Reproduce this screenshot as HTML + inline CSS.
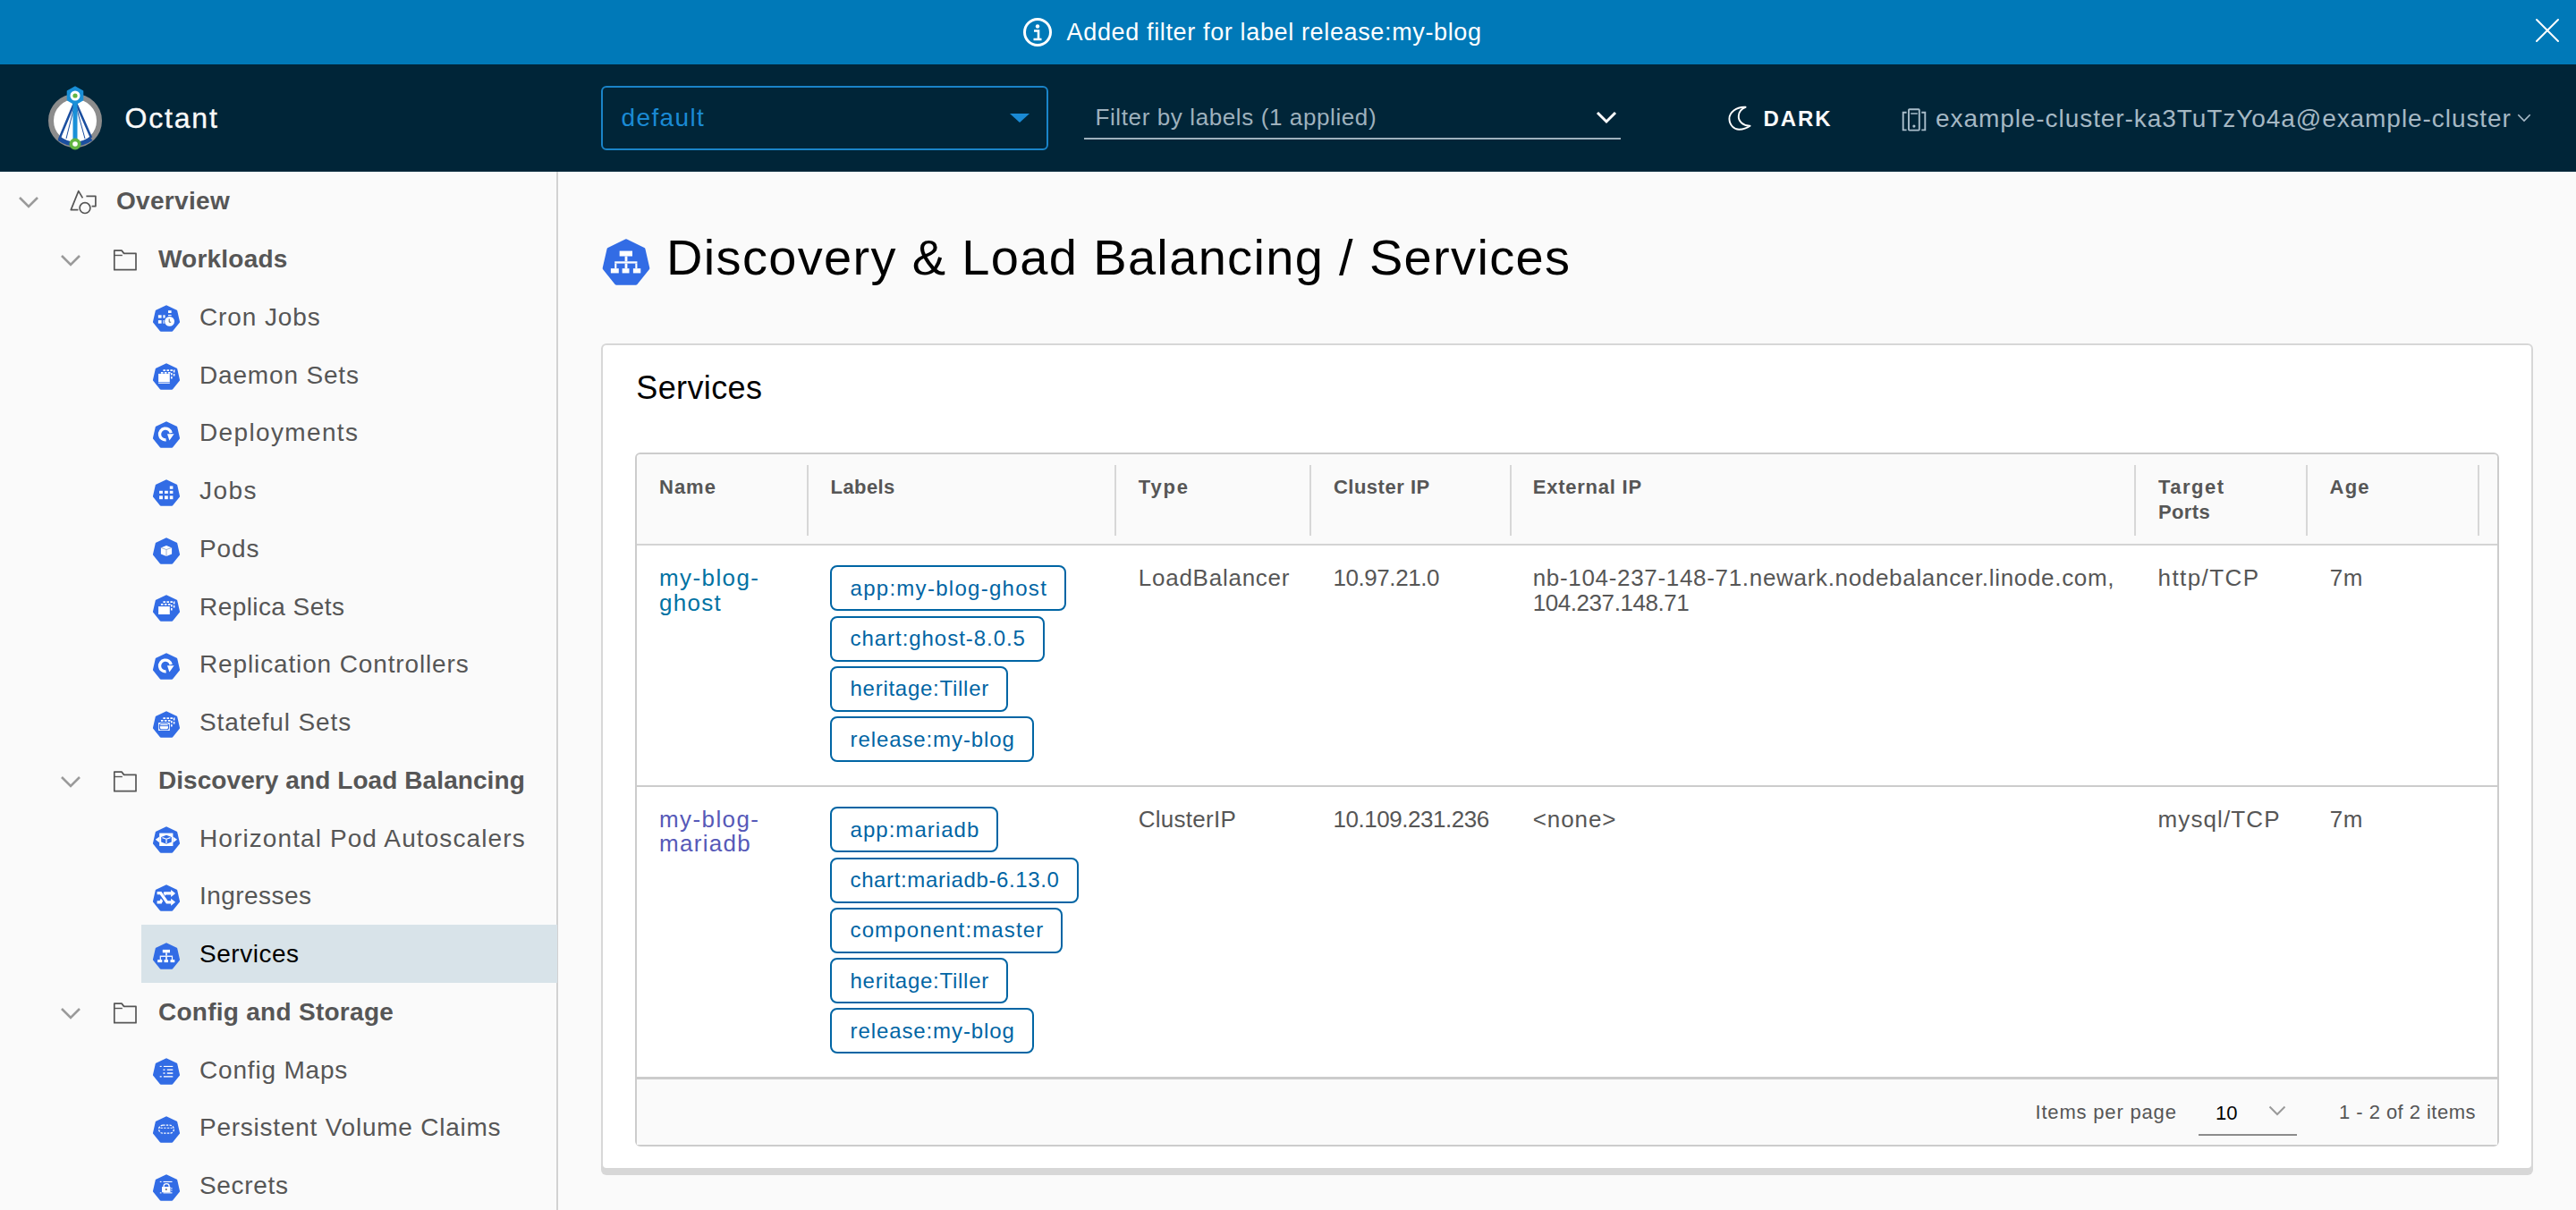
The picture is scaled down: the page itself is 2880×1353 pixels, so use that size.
<!DOCTYPE html>
<html><head><meta charset="utf-8"><style>
html,body{margin:0;padding:0;width:2880px;height:1353px;overflow:hidden;font-family:"Liberation Sans", sans-serif;}
</style></head><body>
<div style="position:absolute;left:0px;top:0px;width:2880px;height:1353px;background:#fafafa"></div>
<div style="position:absolute;left:0px;top:0px;width:2880px;height:72px;background:#0079b8"></div>
<div style="position:absolute;left:0px;top:72px;width:2880px;height:120px;background:#002538"></div>
<div style="position:absolute;left:0px;top:192px;width:622px;height:1161px;background:#fafafa"></div>
<div style="position:absolute;left:622px;top:192px;width:2px;height:1161px;background:#d2d2d2"></div>
<svg style="position:absolute;left:1143px;top:19px;" width="34" height="34" viewBox="0 0 34 34"><circle cx="17" cy="17" r="14.5" fill="none" stroke="#fff" stroke-width="3"/><circle cx="17" cy="10.5" r="2.2" fill="#fff"/><path d="M13 15.5h5v9.5M12.5 25h9" fill="none" stroke="#fff" stroke-width="2.6"/></svg>
<div style="position:absolute;left:1192.60px;top:22.94px;font-size:27px;line-height:27px;color:#ffffff;letter-spacing:0.641px;white-space:nowrap;">Added filter for label release:my-blog</div>
<svg style="position:absolute;left:2834px;top:20px;" width="28" height="28" viewBox="0 0 28 28"><path d="M2 2L26 26M26 2L2 26" stroke="#fff" stroke-width="2" stroke-linecap="round" fill="none"/></svg>
<svg style="position:absolute;left:50px;top:93px;" width="70" height="76" viewBox="0 0 70 76">
<circle cx="34" cy="42" r="27" fill="#fff" stroke="#8c8c8c" stroke-width="6"/>
<path d="M16 62 Q34 74 52 62" fill="none" stroke="#1b4fa0" stroke-width="5"/>
<path d="M34 20 L16 63 M34 20 L52 61" stroke="#1b4fa0" stroke-width="2.6" fill="none"/>
<path d="M34 22 L24 62 M34 22 L45 62" stroke="#1b4fa0" stroke-width="1" fill="none"/>
<rect x="31.5" y="18" width="5" height="48" fill="#1a90d8"/>
<polygon points="34.00,4.00 42.57,8.95 42.57,18.85 34.00,23.80 25.43,18.85 25.43,8.95" fill="#1a90d8" stroke="#1a90d8" stroke-width="1.4" stroke-linejoin="round"/>
<circle cx="34" cy="14" r="5.5" fill="#fff"/>
<circle cx="34" cy="14" r="2.6" fill="#62b543"/>
<circle cx="34" cy="68" r="6.5" fill="#62b543"/>
<circle cx="34" cy="68" r="2.8" fill="#fff"/>
</svg>
<div style="position:absolute;left:139.40px;top:116.01px;font-size:32px;line-height:32px;color:#fafafa;letter-spacing:1.847px;white-space:nowrap;-webkit-text-stroke:0.35px #fafafa;">Octant</div>
<div style="position:absolute;left:672px;top:96px;width:500px;height:72px;box-sizing:border-box;border:2px solid #1a84c8;border-radius:6px"></div>
<div style="position:absolute;left:694.60px;top:118.10px;font-size:28px;line-height:28px;color:#1a8ad4;letter-spacing:1.351px;white-space:nowrap;">default</div>
<svg style="position:absolute;left:1129px;top:127px;" width="22" height="10" viewBox="0 0 22 10"><path d="M0 0H22L11 10Z" fill="#1a8ad4"/></svg>
<div style="position:absolute;left:1224.50px;top:117.99px;font-size:26px;line-height:26px;color:#9eb1bd;letter-spacing:0.607px;white-space:nowrap;">Filter by labels (1 applied)</div>
<div style="position:absolute;left:1212px;top:154px;width:600px;height:2px;background:#9eb1bd"></div>
<svg style="position:absolute;left:1784px;top:124px;" width="24" height="16" viewBox="0 0 24 16"><path d="M2 2L12 12L22 2" fill="none" stroke="#fff" stroke-width="3"/></svg>
<svg style="position:absolute;left:1930px;top:118px;" width="30" height="30" viewBox="0 0 30 30"><path d="M21.6 1.8C11 1.2 3.2 8 3.4 15C3.6 22 9 27 14.5 26.8C19.8 26.6 24 24.5 26.6 22.7C19 23 13.2 17.5 13.8 11.5C14.2 7 17.5 3.3 21.6 1.8Z" fill="none" stroke="#fff" stroke-width="1.9" stroke-linejoin="round"/></svg>
<div style="position:absolute;left:1971.50px;top:121.48px;font-size:24px;line-height:24px;color:#fafafa;font-weight:700;letter-spacing:1.896px;white-space:nowrap;">DARK</div>
<svg style="position:absolute;left:2124px;top:120px;" width="32" height="28" viewBox="0 0 32 28"><rect x="10" y="2.2" width="11.8" height="23.4" rx="0.8" fill="none" stroke="#a9bdca" stroke-width="1.9"/><path d="M12.2 7H19.8" stroke="#a9bdca" stroke-width="1.5"/><circle cx="15.9" cy="21.1" r="1.6" fill="#a9bdca"/><path d="M7.6 5.8H3.7V25.4H7.6M24.3 5.8H28.3V25.4H24.3" fill="none" stroke="#a9bdca" stroke-width="1.9"/></svg>
<div style="position:absolute;left:2164.00px;top:118.80px;font-size:28px;line-height:28px;color:#a5b8c4;letter-spacing:0.932px;white-space:nowrap;">example-cluster-ka3TuTzYo4a@example-cluster</div>
<svg style="position:absolute;left:2814px;top:127px;" width="16" height="10" viewBox="0 0 16 10"><path d="M1.3 1.3L8 8L14.7 1.3" fill="none" stroke="#a9bdca" stroke-width="1.6"/></svg>
<svg style="position:absolute;left:20px;top:219px;" width="24" height="14" viewBox="0 0 24 14"><path d="M2 2L12 12L22 2" fill="none" stroke="#9a9a9a" stroke-width="2.6"/></svg>
<svg style="position:absolute;left:78px;top:212px;" width="32" height="30" viewBox="0 0 32 30"><path d="M14.4 9.4L9.8 1.6L1.3 22.6H9.4" fill="none" stroke="#565656" stroke-width="1.7" stroke-linejoin="round"/><path d="M18.4 7.4H28.9V18.6H24.6" fill="none" stroke="#565656" stroke-width="1.7" stroke-linejoin="round"/><circle cx="17" cy="20.6" r="5.9" fill="none" stroke="#565656" stroke-width="1.7"/></svg>
<div style="position:absolute;left:130.00px;top:211.30px;font-size:28px;line-height:28px;color:#565656;font-weight:700;letter-spacing:0.308px;white-space:nowrap;">Overview</div>
<svg style="position:absolute;left:67px;top:284px;" width="24" height="14" viewBox="0 0 24 14"><path d="M2 2L12 12L22 2" fill="none" stroke="#9a9a9a" stroke-width="2.6"/></svg>
<svg style="position:absolute;left:126px;top:278px;" width="28" height="26" viewBox="0 0 28 26"><path d="M1.8 2.1H10L12.6 5.4H26V23.7H1.8Z" fill="none" stroke="#565656" stroke-width="1.7" stroke-linejoin="round"/><path d="M1.8 7.5H10.8" stroke="#565656" stroke-width="1.4"/></svg>
<div style="position:absolute;left:176.90px;top:276.06px;font-size:28px;line-height:28px;color:#565656;font-weight:700;letter-spacing:0.230px;white-space:nowrap;">Workloads</div>
<svg style="position:absolute;left:170.0px;top:340.47px;" width="32" height="32" viewBox="0 0 32 32"><polygon points="16.00,2.56 27.10,7.91 29.84,19.92 22.16,29.55 9.84,29.55 2.16,19.92 4.90,7.91" fill="#326ce5" stroke="#326ce5" stroke-width="2.4" stroke-linejoin="round"/><rect x="6.90" y="12.30" width="3.70" height="3.30" fill="#ffffff"/><rect x="12.40" y="12.30" width="2.20" height="3.30" fill="#ffffff"/><rect x="6.90" y="18.10" width="3.70" height="3.60" fill="#ffffff"/><rect x="12.40" y="18.10" width="2.20" height="3.60" fill="#ffffff"/><rect x="18.00" y="7.20" width="3.60" height="2.80" fill="#ffffff"/><rect x="18.00" y="12.00" width="3.60" height="1.30" fill="#ffffff"/><circle cx="19.6" cy="19.4" r="6.3" fill="#326ce5"/><circle cx="19.6" cy="19.4" r="5.4" fill="#fff"/><path d="M19.2 16.6V20.2H21.2" fill="none" stroke="#44546e" stroke-width="0.9"/></svg>
<div style="position:absolute;left:223.00px;top:340.82px;font-size:28px;line-height:28px;color:#565656;letter-spacing:0.895px;white-space:nowrap;">Cron Jobs</div>
<svg style="position:absolute;left:170.0px;top:405.23px;" width="32" height="32" viewBox="0 0 32 32"><polygon points="16.00,2.56 27.10,7.91 29.84,19.92 22.16,29.55 9.84,29.55 2.16,19.92 4.90,7.91" fill="#326ce5" stroke="#326ce5" stroke-width="2.4" stroke-linejoin="round"/><path d="M12.4 9.1H24.6V16" fill="none" stroke="#fff" stroke-width="1.6" stroke-dasharray="2.6 1.4"/><path d="M9.9 11.9H21.8V18.5" fill="none" stroke="#fff" stroke-width="1.6" stroke-dasharray="2.6 1.4"/><rect x="7.10" y="12.90" width="12.70" height="9.30" fill="#ffffff"/><rect x="7.10" y="22.80" width="12.70" height="1.00" fill="#ffffff"/></svg>
<div style="position:absolute;left:223.00px;top:405.58px;font-size:28px;line-height:28px;color:#565656;letter-spacing:0.833px;white-space:nowrap;">Daemon Sets</div>
<svg style="position:absolute;left:170.0px;top:469.99px;" width="32" height="32" viewBox="0 0 32 32"><polygon points="16.00,2.56 27.10,7.91 29.84,19.92 22.16,29.55 9.84,29.55 2.16,19.92 4.90,7.91" fill="#326ce5" stroke="#326ce5" stroke-width="2.4" stroke-linejoin="round"/><path d="M15.6 21.9 A6.4 6.4 0 1 1 21.2 14.2" fill="none" stroke="#fff" stroke-width="3.3"/><path d="M17.0 15.2H24.6L19.4 22.4Z" fill="#fff"/></svg>
<div style="position:absolute;left:223.00px;top:470.34px;font-size:28px;line-height:28px;color:#565656;letter-spacing:1.356px;white-space:nowrap;">Deployments</div>
<svg style="position:absolute;left:170.0px;top:534.75px;" width="32" height="32" viewBox="0 0 32 32"><polygon points="16.00,2.56 27.10,7.91 29.84,19.92 22.16,29.55 9.84,29.55 2.16,19.92 4.90,7.91" fill="#326ce5" stroke="#326ce5" stroke-width="2.4" stroke-linejoin="round"/><rect x="19.80" y="8.50" width="3.60" height="3.30" fill="#ffffff"/><rect x="8.10" y="13.80" width="3.80" height="3.10" fill="#ffffff"/><rect x="14.00" y="13.80" width="3.80" height="3.10" fill="#ffffff"/><rect x="19.80" y="13.80" width="3.60" height="3.10" fill="#ffffff"/><rect x="8.10" y="19.40" width="3.80" height="3.80" fill="#ffffff"/><rect x="14.00" y="19.40" width="3.80" height="3.80" fill="#ffffff"/><rect x="19.80" y="19.40" width="3.60" height="3.80" fill="#ffffff"/></svg>
<div style="position:absolute;left:223.00px;top:535.10px;font-size:28px;line-height:28px;color:#565656;letter-spacing:1.481px;white-space:nowrap;">Jobs</div>
<svg style="position:absolute;left:170.0px;top:599.51px;" width="32" height="32" viewBox="0 0 32 32"><polygon points="16.00,2.56 27.10,7.91 29.84,19.92 22.16,29.55 9.84,29.55 2.16,19.92 4.90,7.91" fill="#326ce5" stroke="#326ce5" stroke-width="2.4" stroke-linejoin="round"/><path d="M16 9.9L22.1 12.4V19.5L16 22L9.9 19.5V12.4Z" fill="#fff"/><path d="M9.9 12.4L16 14.5L22.1 12.4M16 14.5V22" fill="none" stroke="#8aa0c8" stroke-width="0.8"/></svg>
<div style="position:absolute;left:223.00px;top:599.86px;font-size:28px;line-height:28px;color:#565656;letter-spacing:0.891px;white-space:nowrap;">Pods</div>
<svg style="position:absolute;left:170.0px;top:664.27px;" width="32" height="32" viewBox="0 0 32 32"><polygon points="16.00,2.56 27.10,7.91 29.84,19.92 22.16,29.55 9.84,29.55 2.16,19.92 4.90,7.91" fill="#326ce5" stroke="#326ce5" stroke-width="2.4" stroke-linejoin="round"/><path d="M12.4 9.1H24.6V16" fill="none" stroke="#fff" stroke-width="1.6" stroke-dasharray="2.6 1.4"/><path d="M9.9 11.9H21.8V18.5" fill="none" stroke="#fff" stroke-width="1.6" stroke-dasharray="2.6 1.4"/><rect x="7.10" y="14.10" width="12.70" height="8.90" fill="#ffffff"/></svg>
<div style="position:absolute;left:223.00px;top:664.62px;font-size:28px;line-height:28px;color:#565656;letter-spacing:0.427px;white-space:nowrap;">Replica Sets</div>
<svg style="position:absolute;left:170.0px;top:729.03px;" width="32" height="32" viewBox="0 0 32 32"><polygon points="16.00,2.56 27.10,7.91 29.84,19.92 22.16,29.55 9.84,29.55 2.16,19.92 4.90,7.91" fill="#326ce5" stroke="#326ce5" stroke-width="2.4" stroke-linejoin="round"/><path d="M15.6 21.9 A6.4 6.4 0 1 1 21.2 14.2" fill="none" stroke="#fff" stroke-width="3.3"/><path d="M17.0 15.2H24.6L19.4 22.4Z" fill="#fff"/></svg>
<div style="position:absolute;left:223.00px;top:729.38px;font-size:28px;line-height:28px;color:#565656;letter-spacing:0.867px;white-space:nowrap;">Replication Controllers</div>
<svg style="position:absolute;left:170.0px;top:793.79px;" width="32" height="32" viewBox="0 0 32 32"><polygon points="16.00,2.56 27.10,7.91 29.84,19.92 22.16,29.55 9.84,29.55 2.16,19.92 4.90,7.91" fill="#326ce5" stroke="#326ce5" stroke-width="2.4" stroke-linejoin="round"/><path d="M12.4 9.1H24.6V16" fill="none" stroke="#fff" stroke-width="1.6" stroke-dasharray="2.6 1.4"/><path d="M9.9 11.9H21.8V18.5" fill="none" stroke="#fff" stroke-width="1.6" stroke-dasharray="2.6 1.4"/><rect x="7.10" y="14.00" width="12.70" height="9.00" fill="#ffffff"/><rect x="8.4" y="15.3" width="10.1" height="6.4" rx="2" fill="none" stroke="#326ce5" stroke-width="1.1"/><path d="M8.4 17.6H18.5" stroke="#326ce5" stroke-width="1"/></svg>
<div style="position:absolute;left:223.00px;top:794.14px;font-size:28px;line-height:28px;color:#565656;letter-spacing:0.868px;white-space:nowrap;">Stateful Sets</div>
<svg style="position:absolute;left:67px;top:867px;" width="24" height="14" viewBox="0 0 24 14"><path d="M2 2L12 12L22 2" fill="none" stroke="#9a9a9a" stroke-width="2.6"/></svg>
<svg style="position:absolute;left:126px;top:861px;" width="28" height="26" viewBox="0 0 28 26"><path d="M1.8 2.1H10L12.6 5.4H26V23.7H1.8Z" fill="none" stroke="#565656" stroke-width="1.7" stroke-linejoin="round"/><path d="M1.8 7.5H10.8" stroke="#565656" stroke-width="1.4"/></svg>
<div style="position:absolute;left:176.90px;top:858.90px;font-size:28px;line-height:28px;color:#565656;font-weight:700;letter-spacing:0.082px;white-space:nowrap;">Discovery and Load Balancing</div>
<svg style="position:absolute;left:170.0px;top:923.31px;" width="32" height="32" viewBox="0 0 32 32"><polygon points="16.00,2.56 27.10,7.91 29.84,19.92 22.16,29.55 9.84,29.55 2.16,19.92 4.90,7.91" fill="#326ce5" stroke="#326ce5" stroke-width="2.4" stroke-linejoin="round"/><rect x="8.20" y="8.60" width="15.20" height="14.40" fill="#ffffff"/><path d="M16 10.8L21.8 13V18.6L16 20.8L10.2 18.6V13Z" fill="#326ce5"/><path d="M11.5 13.6L16 15.2L20.5 13.6M16 15.2V20" fill="none" stroke="#fff" stroke-width="1.2"/><path d="M3.8 15.8L8.3 12.4V19.3Z" fill="#fff"/><path d="M28.1 15.8L23.4 12.4V19.3Z" fill="#fff"/></svg>
<div style="position:absolute;left:223.00px;top:923.66px;font-size:28px;line-height:28px;color:#565656;letter-spacing:1.099px;white-space:nowrap;">Horizontal Pod Autoscalers</div>
<svg style="position:absolute;left:170.0px;top:988.07px;" width="32" height="32" viewBox="0 0 32 32"><polygon points="16.00,2.56 27.10,7.91 29.84,19.92 22.16,29.55 9.84,29.55 2.16,19.92 4.90,7.91" fill="#326ce5" stroke="#326ce5" stroke-width="2.4" stroke-linejoin="round"/><path d="M5.6 20.8H9.6L14.4 10.9H21.5" fill="none" stroke="#fff" stroke-width="3.2" stroke-linejoin="miter"/><path d="M8.6 10.6L16.8 20.8" fill="none" stroke="#326ce5" stroke-width="5.6"/><path d="M5.6 10.6H9.6L16.8 20.8H21.5" fill="none" stroke="#fff" stroke-width="3.2"/><path d="M21.1 6.9L26.1 10.9L21.1 14.9Z" fill="#fff"/><path d="M21.1 16.8L26.1 20.8L21.1 24.8Z" fill="#fff"/></svg>
<div style="position:absolute;left:223.00px;top:988.42px;font-size:28px;line-height:28px;color:#565656;letter-spacing:0.447px;white-space:nowrap;">Ingresses</div>
<div style="position:absolute;left:158px;top:1034px;width:465px;height:65px;background:#d8e3e9"></div>
<svg style="position:absolute;left:170.0px;top:1052.83px;" width="32" height="32" viewBox="0 0 32 32"><polygon points="16.00,2.56 27.10,7.91 29.84,19.92 22.16,29.55 9.84,29.55 2.16,19.92 4.90,7.91" fill="#326ce5" stroke="#326ce5" stroke-width="2.4" stroke-linejoin="round"/><rect x="11.80" y="8.90" width="8.20" height="3.40" fill="#ffffff"/><rect x="15.20" y="12.30" width="1.60" height="3.30" fill="#ffffff"/><rect x="8.70" y="15.60" width="14.40" height="1.30" fill="#ffffff"/><rect x="8.70" y="16.90" width="1.20" height="3.20" fill="#ffffff"/><rect x="15.20" y="16.90" width="1.60" height="3.20" fill="#ffffff"/><rect x="21.90" y="16.90" width="1.20" height="3.20" fill="#ffffff"/><rect x="6.20" y="20.10" width="5.10" height="3.00" fill="#ffffff"/><rect x="13.50" y="20.10" width="4.50" height="3.00" fill="#ffffff"/><rect x="20.50" y="20.10" width="4.80" height="3.00" fill="#ffffff"/></svg>
<div style="position:absolute;left:223.00px;top:1053.18px;font-size:28px;line-height:28px;color:#000000;letter-spacing:0.518px;white-space:nowrap;">Services</div>
<svg style="position:absolute;left:67px;top:1126px;" width="24" height="14" viewBox="0 0 24 14"><path d="M2 2L12 12L22 2" fill="none" stroke="#9a9a9a" stroke-width="2.6"/></svg>
<svg style="position:absolute;left:126px;top:1120px;" width="28" height="26" viewBox="0 0 28 26"><path d="M1.8 2.1H10L12.6 5.4H26V23.7H1.8Z" fill="none" stroke="#565656" stroke-width="1.7" stroke-linejoin="round"/><path d="M1.8 7.5H10.8" stroke="#565656" stroke-width="1.4"/></svg>
<div style="position:absolute;left:176.90px;top:1117.94px;font-size:28px;line-height:28px;color:#565656;font-weight:700;letter-spacing:0.278px;white-space:nowrap;">Config and Storage</div>
<svg style="position:absolute;left:170.0px;top:1182.35px;" width="32" height="32" viewBox="0 0 32 32"><polygon points="16.00,2.56 27.10,7.91 29.84,19.92 22.16,29.55 9.84,29.55 2.16,19.92 4.90,7.91" fill="#326ce5" stroke="#326ce5" stroke-width="2.4" stroke-linejoin="round"/><rect x="8.70" y="9.90" width="2.00" height="1.10" fill="#ffffff"/><rect x="12.90" y="9.90" width="10.40" height="1.10" fill="#ffffff"/><rect x="12.50" y="13.60" width="1.90" height="1.30" fill="#ffffff"/><rect x="16.80" y="13.60" width="6.50" height="1.30" fill="#ffffff"/><rect x="12.50" y="17.30" width="1.90" height="1.50" fill="#ffffff"/><rect x="16.80" y="17.30" width="6.50" height="1.50" fill="#ffffff"/><rect x="8.70" y="21.20" width="2.00" height="1.30" fill="#ffffff"/><rect x="12.90" y="21.20" width="10.40" height="1.30" fill="#ffffff"/></svg>
<div style="position:absolute;left:223.00px;top:1182.70px;font-size:28px;line-height:28px;color:#565656;letter-spacing:0.818px;white-space:nowrap;">Config Maps</div>
<svg style="position:absolute;left:170.0px;top:1247.11px;" width="32" height="32" viewBox="0 0 32 32"><polygon points="16.00,2.56 27.10,7.91 29.84,19.92 22.16,29.55 9.84,29.55 2.16,19.92 4.90,7.91" fill="#326ce5" stroke="#326ce5" stroke-width="2.4" stroke-linejoin="round"/><rect x="7.6" y="11.2" width="16.8" height="9" rx="4.5" fill="none" stroke="#fff" stroke-width="1.3" stroke-dasharray="2.4 1.3"/><path d="M9.5 14.2H22.5" stroke="#fff" stroke-width="1.1" stroke-dasharray="2.4 1.3"/></svg>
<div style="position:absolute;left:223.00px;top:1247.46px;font-size:28px;line-height:28px;color:#565656;letter-spacing:0.763px;white-space:nowrap;">Persistent Volume Claims</div>
<svg style="position:absolute;left:170.0px;top:1311.87px;" width="32" height="32" viewBox="0 0 32 32"><polygon points="16.00,2.56 27.10,7.91 29.84,19.92 22.16,29.55 9.84,29.55 2.16,19.92 4.90,7.91" fill="#326ce5" stroke="#326ce5" stroke-width="2.4" stroke-linejoin="round"/><rect x="8.80" y="8.90" width="1.70" height="1.10" fill="#ffffff"/><rect x="12.50" y="8.90" width="10.00" height="1.10" fill="#ffffff"/><rect x="8.80" y="21.30" width="1.70" height="1.10" fill="#ffffff"/><rect x="12.50" y="21.30" width="10.00" height="1.10" fill="#ffffff"/><path d="M13.1 15.2V14 A3 2.4 0 0 1 19.1 14V15.2" fill="none" stroke="#fff" stroke-width="1.3"/><rect x="11.00" y="15.00" width="9.50" height="6.20" fill="#ffffff"/><rect x="21.20" y="16.20" width="1.30" height="1.20" fill="#ffffff"/><rect x="21.20" y="18.60" width="1.30" height="1.00" fill="#ffffff"/><rect x="15.0" y="17.2" width="1.6" height="1.6" fill="#555"/></svg>
<div style="position:absolute;left:223.00px;top:1312.22px;font-size:28px;line-height:28px;color:#565656;letter-spacing:0.677px;white-space:nowrap;">Secrets</div>
<svg style="position:absolute;left:672.3px;top:264.75px;" width="56" height="56" viewBox="0 0 32 32"><polygon points="16.00,2.56 27.10,7.91 29.84,19.92 22.16,29.55 9.84,29.55 2.16,19.92 4.90,7.91" fill="#326ce5" stroke="#326ce5" stroke-width="2.4" stroke-linejoin="round"/><rect x="11.80" y="8.90" width="8.20" height="3.40" fill="#ffffff"/><rect x="15.20" y="12.30" width="1.60" height="3.30" fill="#ffffff"/><rect x="8.70" y="15.60" width="14.40" height="1.30" fill="#ffffff"/><rect x="8.70" y="16.90" width="1.20" height="3.20" fill="#ffffff"/><rect x="15.20" y="16.90" width="1.60" height="3.20" fill="#ffffff"/><rect x="21.90" y="16.90" width="1.20" height="3.20" fill="#ffffff"/><rect x="6.20" y="20.10" width="5.10" height="3.00" fill="#ffffff"/><rect x="13.50" y="20.10" width="4.50" height="3.00" fill="#ffffff"/><rect x="20.50" y="20.10" width="4.80" height="3.00" fill="#ffffff"/></svg>
<div style="position:absolute;left:745.00px;top:259.60px;font-size:56px;line-height:56px;color:#000000;letter-spacing:1.339px;white-space:nowrap;">Discovery &amp; Load Balancing / Services</div>
<div style="position:absolute;left:672px;top:384px;width:2160px;height:924px;box-sizing:border-box;background:#fff;border:2px solid #d7d7d7;border-radius:6px;box-shadow:0 6px 0 0 #d7d7d7"></div>
<div style="position:absolute;left:711.30px;top:415.53px;font-size:36px;line-height:36px;color:#000000;letter-spacing:0.381px;white-space:nowrap;">Services</div>
<div style="position:absolute;left:710px;top:506px;width:2084px;height:776px;box-sizing:border-box;background:#fff;border:2px solid #cccccc;border-radius:6px;overflow:hidden"></div>
<div style="position:absolute;left:712px;top:508px;width:2080px;height:100px;background:#fafafa;border-radius:4px 4px 0 0"></div>
<div style="position:absolute;left:712px;top:608px;width:2080px;height:2px;background:#d4d4d4"></div>
<div style="position:absolute;left:902px;top:520px;width:2px;height:79px;background:#d7d7d7"></div>
<div style="position:absolute;left:1246px;top:520px;width:2px;height:79px;background:#d7d7d7"></div>
<div style="position:absolute;left:1464px;top:520px;width:2px;height:79px;background:#d7d7d7"></div>
<div style="position:absolute;left:1688px;top:520px;width:2px;height:79px;background:#d7d7d7"></div>
<div style="position:absolute;left:2386px;top:520px;width:2px;height:79px;background:#d7d7d7"></div>
<div style="position:absolute;left:2578px;top:520px;width:2px;height:79px;background:#d7d7d7"></div>
<div style="position:absolute;left:2770px;top:520px;width:2px;height:79px;background:#d7d7d7"></div>
<div style="position:absolute;left:737.00px;top:534.38px;font-size:22px;line-height:22px;color:#565656;font-weight:700;letter-spacing:0.993px;white-space:nowrap;">Name</div>
<div style="position:absolute;left:928.60px;top:534.38px;font-size:22px;line-height:22px;color:#565656;font-weight:700;letter-spacing:0.403px;white-space:nowrap;">Labels</div>
<div style="position:absolute;left:1272.70px;top:534.38px;font-size:22px;line-height:22px;color:#565656;font-weight:700;letter-spacing:1.894px;white-space:nowrap;">Type</div>
<div style="position:absolute;left:1490.90px;top:534.38px;font-size:22px;line-height:22px;color:#565656;font-weight:700;letter-spacing:0.512px;white-space:nowrap;">Cluster IP</div>
<div style="position:absolute;left:1713.70px;top:534.38px;font-size:22px;line-height:22px;color:#565656;font-weight:700;letter-spacing:0.770px;white-space:nowrap;">External IP</div>
<div style="position:absolute;left:2413.00px;top:534.38px;font-size:22px;line-height:22px;color:#565656;font-weight:700;letter-spacing:1.478px;white-space:nowrap;">Target</div>
<div style="position:absolute;left:2413.00px;top:562.38px;font-size:22px;line-height:22px;color:#565656;font-weight:700;letter-spacing:0.366px;white-space:nowrap;">Ports</div>
<div style="position:absolute;left:2604.60px;top:534.38px;font-size:22px;line-height:22px;color:#565656;font-weight:700;letter-spacing:1.169px;white-space:nowrap;">Age</div>
<div style="position:absolute;left:712px;top:878px;width:2080px;height:2px;background:#cccccc"></div>
<div style="position:absolute;left:712px;top:1204px;width:2080px;height:3px;background:#cccccc"></div>
<div style="position:absolute;left:712px;top:1207px;width:2080px;height:73px;background:#fafafa"></div>
<div style="position:absolute;left:737.00px;top:633.29px;font-size:26px;line-height:26px;color:#0072a3;letter-spacing:1.413px;white-space:nowrap;">my-blog-</div>
<div style="position:absolute;left:737.00px;top:660.99px;font-size:26px;line-height:26px;color:#0072a3;letter-spacing:1.305px;white-space:nowrap;">ghost</div>
<div style="position:absolute;left:1272.80px;top:633.29px;font-size:26px;line-height:26px;color:#565656;letter-spacing:0.745px;white-space:nowrap;">LoadBalancer</div>
<div style="position:absolute;left:1490.60px;top:633.29px;font-size:26px;line-height:26px;color:#565656;letter-spacing:-0.459px;white-space:nowrap;">10.97.21.0</div>
<div style="position:absolute;left:1713.70px;top:633.29px;font-size:26px;line-height:26px;color:#565656;letter-spacing:0.680px;white-space:nowrap;">nb-104-237-148-71.newark.nodebalancer.linode.com,</div>
<div style="position:absolute;left:1713.70px;top:660.99px;font-size:26px;line-height:26px;color:#565656;letter-spacing:-0.434px;white-space:nowrap;">104.237.148.71</div>
<div style="position:absolute;left:2412.50px;top:633.29px;font-size:26px;line-height:26px;color:#565656;letter-spacing:1.420px;white-space:nowrap;">http/TCP</div>
<div style="position:absolute;left:2604.70px;top:633.29px;font-size:26px;line-height:26px;color:#565656;letter-spacing:0.591px;white-space:nowrap;">7m</div>
<div style="position:absolute;left:928px;top:632.3px;width:263.7px;height:51px;box-sizing:border-box;border:2px solid #0065a4;border-radius:8px"></div>
<div style="position:absolute;left:950.50px;top:645.98px;font-size:24px;line-height:24px;color:#0065a4;letter-spacing:1.283px;white-space:nowrap;">app:my-blog-ghost</div>
<div style="position:absolute;left:928px;top:688.5px;width:239.8px;height:51px;box-sizing:border-box;border:2px solid #0065a4;border-radius:8px"></div>
<div style="position:absolute;left:950.50px;top:702.18px;font-size:24px;line-height:24px;color:#0065a4;letter-spacing:0.956px;white-space:nowrap;">chart:ghost-8.0.5</div>
<div style="position:absolute;left:928px;top:744.7px;width:199.1px;height:51px;box-sizing:border-box;border:2px solid #0065a4;border-radius:8px"></div>
<div style="position:absolute;left:950.50px;top:758.38px;font-size:24px;line-height:24px;color:#0065a4;letter-spacing:0.730px;white-space:nowrap;">heritage:Tiller</div>
<div style="position:absolute;left:928px;top:800.9px;width:227.8px;height:51px;box-sizing:border-box;border:2px solid #0065a4;border-radius:8px"></div>
<div style="position:absolute;left:950.50px;top:814.58px;font-size:24px;line-height:24px;color:#0065a4;letter-spacing:0.905px;white-space:nowrap;">release:my-blog</div>
<div style="position:absolute;left:737.00px;top:902.59px;font-size:26px;line-height:26px;color:#5659b8;letter-spacing:1.413px;white-space:nowrap;">my-blog-</div>
<div style="position:absolute;left:737.00px;top:930.29px;font-size:26px;line-height:26px;color:#5659b8;letter-spacing:1.299px;white-space:nowrap;">mariadb</div>
<div style="position:absolute;left:1272.80px;top:902.59px;font-size:26px;line-height:26px;color:#565656;letter-spacing:0.262px;white-space:nowrap;">ClusterIP</div>
<div style="position:absolute;left:1490.60px;top:902.59px;font-size:26px;line-height:26px;color:#565656;letter-spacing:-0.465px;white-space:nowrap;">10.109.231.236</div>
<div style="position:absolute;left:1713.70px;top:902.59px;font-size:26px;line-height:26px;color:#565656;letter-spacing:0.922px;white-space:nowrap;">&lt;none&gt;</div>
<div style="position:absolute;left:2412.50px;top:902.59px;font-size:26px;line-height:26px;color:#565656;letter-spacing:1.111px;white-space:nowrap;">mysql/TCP</div>
<div style="position:absolute;left:2604.70px;top:902.59px;font-size:26px;line-height:26px;color:#565656;letter-spacing:0.591px;white-space:nowrap;">7m</div>
<div style="position:absolute;left:928px;top:902.3px;width:188.2px;height:51px;box-sizing:border-box;border:2px solid #0065a4;border-radius:8px"></div>
<div style="position:absolute;left:950.50px;top:915.98px;font-size:24px;line-height:24px;color:#0065a4;letter-spacing:1.039px;white-space:nowrap;">app:mariadb</div>
<div style="position:absolute;left:928px;top:958.5px;width:277.8px;height:51px;box-sizing:border-box;border:2px solid #0065a4;border-radius:8px"></div>
<div style="position:absolute;left:950.50px;top:972.18px;font-size:24px;line-height:24px;color:#0065a4;letter-spacing:0.629px;white-space:nowrap;">chart:mariadb-6.13.0</div>
<div style="position:absolute;left:928px;top:1014.7px;width:260.1px;height:51px;box-sizing:border-box;border:2px solid #0065a4;border-radius:8px"></div>
<div style="position:absolute;left:950.50px;top:1028.38px;font-size:24px;line-height:24px;color:#0065a4;letter-spacing:1.129px;white-space:nowrap;">component:master</div>
<div style="position:absolute;left:928px;top:1070.9px;width:199.1px;height:51px;box-sizing:border-box;border:2px solid #0065a4;border-radius:8px"></div>
<div style="position:absolute;left:950.50px;top:1084.58px;font-size:24px;line-height:24px;color:#0065a4;letter-spacing:0.730px;white-space:nowrap;">heritage:Tiller</div>
<div style="position:absolute;left:928px;top:1127.1px;width:227.8px;height:51px;box-sizing:border-box;border:2px solid #0065a4;border-radius:8px"></div>
<div style="position:absolute;left:950.50px;top:1140.78px;font-size:24px;line-height:24px;color:#0065a4;letter-spacing:0.905px;white-space:nowrap;">release:my-blog</div>
<div style="position:absolute;left:2275.50px;top:1232.98px;font-size:22px;line-height:22px;color:#565656;letter-spacing:0.820px;white-space:nowrap;">Items per page</div>
<div style="position:absolute;left:2477.00px;top:1233.98px;font-size:22px;line-height:22px;color:#000000;letter-spacing:0.000px;white-space:nowrap;">10</div>
<svg style="position:absolute;left:2536px;top:1236px;" width="20" height="12" viewBox="0 0 20 12"><path d="M1.5 1.5L10 10L18.5 1.5" fill="none" stroke="#9a9a9a" stroke-width="2"/></svg>
<div style="position:absolute;left:2458px;top:1268px;width:110px;height:2px;background:#8c8c8c"></div>
<div style="position:absolute;left:2615.00px;top:1233.38px;font-size:22px;line-height:22px;color:#565656;letter-spacing:0.461px;white-space:nowrap;">1 - 2 of 2 items</div>
</body></html>
